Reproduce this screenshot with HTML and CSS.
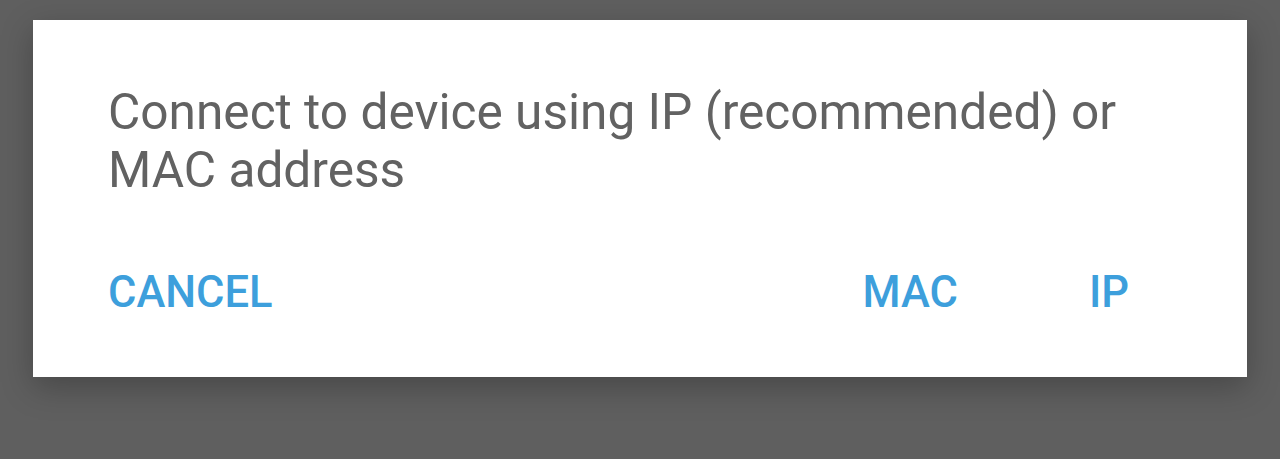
FILE: index.html
```html
<!DOCTYPE html>
<html lang="en">
<head>
  <meta charset="UTF-8">
  <title>Connect to device</title>
  <link rel="stylesheet" href="styles.css">
</head>
<body>
  <div class="dialog">
    <p class="message">Connect to device using IP (recommended) or MAC address</p>
    <div class="actions">
      <button class="btn cancel">CANCEL</button>
      <button class="btn mac">MAC</button>
      <button class="btn ip">IP</button>
    </div>
  </div>
</body>
</html>
```

FILE: styles.css
```css
body { margin: 0; padding: 20px 33px; background: #5f5f5f; font-family: Roboto, "Noto Sans", sans-serif; height: 459px; box-sizing: border-box; overflow: hidden; }
.dialog { width: 1214px; height: 357px; box-sizing: border-box; background: #fff; padding: 63px 75px 0 75px; box-shadow: 0 10px 30px rgba(0,0,0,0.25); }
.message { margin: 0; font-size: 49.6px; line-height: 58px; color: #626262; width: 1050px; }
.actions { display: flex; align-items: center; margin-top: 72px; }
.btn { background: none; border: none; padding: 0; font-family: Roboto, "Noto Sans", sans-serif; font-weight: 500; font-size: 43.5px; line-height: 44px; color: #3d9fdc; cursor: pointer; }
.mac { margin-left: auto; }
.ip { margin-left: 131px; margin-right: 43px; }
```
